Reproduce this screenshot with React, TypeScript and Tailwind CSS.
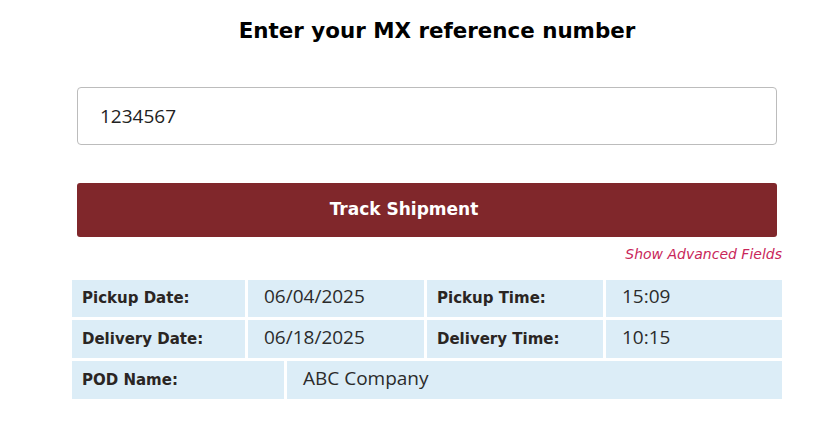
import { useState } from 'react'

const heading = 'font-["DejaVu_Sans","Liberation_Sans",sans-serif]'
const body = 'font-["Open_Sans","Noto_Sans",sans-serif]'

function Cell({ children, label, className = '' }: { children: React.ReactNode; label?: boolean; className?: string }) {
  return (
    <div
      className={
        'flex items-center bg-[#dcedf7] ' +
        (label
          ? heading + ' pl-[10px] text-[15px] font-bold text-[#2a2523] '
          : body + ' pl-[16px] pb-[4px] text-[19px] text-[#2b2b2b] ') +
        className
      }
    >
      {children}
    </div>
  )
}

export default function App() {
  const [reference, setReference] = useState('1234567')

  return (
    <div className="w-[821px] h-[432px] bg-white overflow-hidden">
      <div className={heading + ' ml-[72px] w-[730px] pt-[16px] text-center text-[21.4px] font-bold leading-[30px] text-black'}>
        Enter your MX reference number
      </div>

      <div className="ml-[77px] w-[700px]">
        <input
          value={reference}
          onChange={(e) => setReference(e.target.value)}
          className={body + ' mt-[41px] block h-[58px] w-full rounded-[4px] border border-[#bcbcbc] px-[22px] text-[19px] text-[#222] outline-none'}
        />
        <button className={heading + ' mt-[38px] flex h-[54px] w-full items-center justify-center rounded-[3px] bg-[#80272b] pr-[46px] text-[17px] font-bold text-white'}>
          Track Shipment
        </button>
      </div>

      <div className="ml-[72px] w-[710px]">
        <div className="mt-[4px] text-right leading-[24px]">
          <a className={heading + ' text-[14px] italic text-[#c9265a]'}>Show Advanced Fields</a>
        </div>

        <div className="mt-[14px] flex flex-col gap-[3px]">
          <div className="grid h-[37px] grid-cols-[173px_176px_176px_176px] gap-[3px]">
            <Cell label>Pickup Date:</Cell>
            <Cell>06/04/2025</Cell>
            <Cell label>Pickup Time:</Cell>
            <Cell>15:09</Cell>
          </div>
          <div className="grid h-[38px] grid-cols-[173px_176px_176px_176px] gap-[3px]">
            <Cell label>Delivery Date:</Cell>
            <Cell>06/18/2025</Cell>
            <Cell label>Delivery Time:</Cell>
            <Cell>10:15</Cell>
          </div>
          <div className="grid h-[38px] grid-cols-[212px_1fr] gap-[3px]">
            <Cell label>POD Name:</Cell>
            <Cell>ABC Company</Cell>
          </div>
        </div>
      </div>
    </div>
  )
}
